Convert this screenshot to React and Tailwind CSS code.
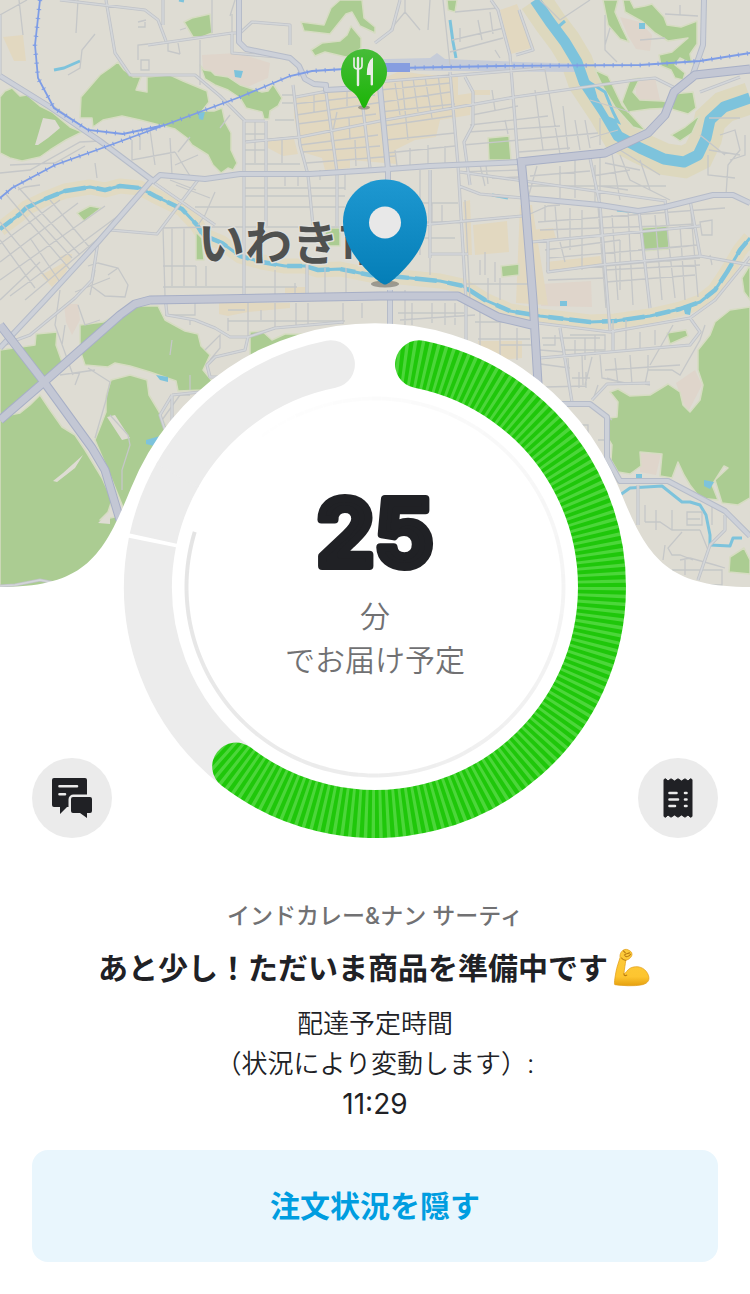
import React from "react";

const FOREST = [
  "M80 118L81 97L100 75L110 68L118 62L124 70L133 77L141 77L136 90L147 92L147 77L170 75L183 81L207 91L209 102L202 111L214 111L222 108L225 122L231 133L231 150L237 163L233 170L228 168L221 173L213 165L208 155L192 145L187 138L175 129L140 120L122 116L103 120L93 127L92 118Z",
  "M0 97L5 91L12 88L20 96L27 95L40 106L52 112L70 127L82 132L66 140L50 150L40 157L22 161L10 158L0 153Z",
  "M184 22L192 18L210 14L212 33L202 37L193 37Z",
  "M200 65L204 70L211 71L215 75L228 77L240 85L262 92L268 91L273 84L282 98L278 106L270 111L269 119L264 119L262 112L246 108L240 98L228 90L215 85L205 79Z",
  "M301 22L324 25L331 8L340 0L362 0L364 18L375 27V33L360 26L352 12L346 14L330 34L304 31Z",
  "M311 50L322 43L340 41L347 35L351 26L361 38L361 48L350 58L325 52L315 56Z",
  "M77 213L90 206L101 208L84 221Z",
  "M196 232L202 238L204 260H196Z",
  "M325 228H340V246H325Z",
  "M447 0H457L455 12L448 10Z",
  "M603 0H618L615 12L622 28L629 42L620 39L608 25Z",
  "M623 0H630L634 8L645 6L652 4L664 17L667 25L681 27L697 21V44L690 54L692 64L680 58L675 65L685 73L683 80L675 78L671 70L661 66L659 55L672 52L688 38L668 41L655 33L643 22L625 12Z",
  "M630 80L640 78L633 92L640 100L662 101L673 103L672 108L650 109L628 112L622 102Z",
  "M673 94L693 92L696 108L688 114L671 109Z",
  "M595 70L608 76L622 105L646 131L633 127L615 107L603 87Z",
  "M671 135L685 127L700 115L692 133L680 141Z",
  "M488 138L509 136L511 160H489Z",
  "M642 228L668 226L669 249L643 251Z",
  "M501 266L519 264V275L502 277Z",
  "M750 265L742 278L744 292L750 300Z",
  "M0 350L35 345L36 334L57 332L56 345L62 362L44 384L0 420Z",
  "M80 325L103 322L135 306H158L165 320L185 331L198 334L201 346L210 355L203 370L212 381L203 390L178 391L176 381L150 372L130 366L115 363L108 367L85 365L80 350Z",
  "M111 380L130 375L147 380L149 395L158 410L167 428L150 460L125 512L112 480L95 440L106 412L106 396Z",
  "M0 417L20 413L30 405L40 395L50 410L62 427L75 435L85 450L102 478L112 500L108 512L100 520L125 515L110 590H0Z",
  "M250 332L262 331L272 340L285 334L303 334L275 348L250 358Z",
  "M610 392L618 389L630 396L650 395L668 384L680 392L683 405L690 412L700 400L703 385L698 370V350L710 335L715 322L730 310L750 307V498L738 505L722 503L715 480L728 468L724 466L712 485L718 500L700 498L690 485L684 475L678 462L672 478L660 476L662 454L640 452L641 466L630 474L618 472L611 460L612 445L609 440V418L617 417L618 402Z",
  "M730 557L744 548L750 560V574L729 572Z",
  "M667 333L686 330L688 336L670 344Z",
];

const SAND = [
  "M3 37L23 35L26 61L14 61Z",
  "M294 97L384 78L400 71L420 74L458 77V95L472 93L470 115L440 120L436 137L415 140L395 150L397 164L350 160V168L325 170L322 158L302 152L298 136L294 116Z",
  "M268 141L294 139L298 154L283 156L268 148Z",
  "M472 90H490V95H472Z",
  "M500 10L517 4L534 47L511 54Z",
  "M41 275L65 262L60 256L72 254L70 262L66 272L52 287Z",
  "M285 287H305V298H285Z",
  "M219 303H290V308L248 312L228 316L219 314Z",
  "M473 225L507 221L509 252L475 255Z",
  "M463 202L470 200L472 255H466Z",
  "M520 205L532 205L548 305L516 303Z",
  "M530 230L553 228L556 238L532 240Z",
  "M546 262L600 256L602 264L547 271Z",
  "M478 341L522 341V358L500 360L479 347Z",
];

const PINK = [
  "M202 55L238 53L270 63L268 78L245 88L225 78L203 72Z",
  "M620 17L640 22L652 35L650 51L636 49L628 36Z",
  "M541 284L591 281L592 307L541 306Z",
  "M635 82L655 78L660 100L637 102Z",
  "M64 304H78L80 320L72 335L66 322Z",
  "M676 383L695 370L702 385L688 412L682 400Z",
  "M640 453L661 454L656 475L640 472Z",
];

const MINOR = [
  "M0 15L27 0M19 0L23 35M78 0L76 33M95 34L82 50L80 68L68 75M0 173L30 170L80 142L100 141M18 190L25 187L40 185M10 165L55 163L85 146M95 163L97 178",
  "M138 22L146 20M138 27H145V22M148 44L138 45V60M141 60H149V70H141Z M178 43L180 54M168 41V51L180 54M212 0V33M200 40V85M232 14V53M180 30L186 28M235 0L230 16",
  "M5 193L72 272M18 187L80 255M30 238L62 285M0 244L60 200M0 262L78 203M0 280L105 206M10 296L118 216M0 222L48 280M0 240L35 288M25 300L118 222M0 300L40 262M25 206L72 258M50 200L90 248",
  "M132 140L132 160L175 152M140 135V150M150 130L155 165M170 138L172 175M175 152L190 176M190 137L178 152M198 155L175 165M110 150L130 162M230 115L220 128M170 180L196 190M176 185L210 198",
  "M163 228L165 296M172 228V286M184 228V286M196 266V286M206 266V286M215 192L205 215L198 225M160 228L215 227H345M195 207H345M244 188H345M244 196H345M163 287H297M163 266H196M275 270V298M295 283V298M325 268V298M346 268V298M245 141L296 137M245 164H300M245 134H265M245 150H265M255 120V163M282 140V163M282 95H293M282 103H293M275 120H294M228 318V331M248 303V340M261 310V320M275 303V328M296 303V325M308 303V325M343 303V324M362 303V318M228 310H245M228 321H345M165 315H195V299M190 320V325",
  "M314 94V112M337 112L331 140M347 90V106M294 104L375 95M296 115L450 92M297 124L376 114M300 145L378 135M302 152L380 146M306 163L395 156M320 170V180M345 172V190M355 140L356 166M349 118L350 140M285 177V186M298 177V186",
  "M395 83L400 115M402 80L408 140M413 78L418 112M425 77L432 118M438 75L443 110M380 90L450 83M380 112L455 104M383 126L452 116M386 140L455 133M387 153L455 146M410 148V166M428 145V166M445 146V166M395 150L397 166",
  "M472 115L518 106M470 125L548 116M468 132L560 126M463 145L598 133M519 152L570 148M492 90L495 110M505 120L508 134M535 90L543 150M545 70L560 154M563 106L568 150M575 120L580 150M585 120L590 148M600 118V145M590 100L630 112M590 138L618 130M486 165L488 184M480 165L485 186M458 172L520 170M492 178L520 177",
  "M405 0V12L390 30M405 12L420 30M443 0L450 65M430 0L428 30M452 40L504 28M450 52L503 38M455 12L498 8M460 28V42M478 20L482 40M490 12L493 34M495 50L500 58M540 0L560 20L590 0M605 15V50L617 62M610 28L605 45M640 40L665 38M665 14L698 16M680 5V15",
  "M420 170V255M431 170V206M400 196V206M420 203H458M420 222H458M432 203V224M418 238H455M430 226V252M430 254V275M442 205V224M465 200L470 300M480 260V275M485 252V275M495 262V282M466 284H533M488 278V300M500 278V300",
  "M537 166L528 198M560 166V198M575 160V198M600 158V200M595 165V205M620 155L630 180L670 200M528 186H666M620 150L660 175M640 160L650 190M530 176L590 171M592 176L630 170M600 186L628 190M605 163L640 170M612 154L620 200",
  "M538 222L725 208M530 214L548 206L560 205M540 230L660 226L695 224M543 240L600 236M545 250L620 240M548 258L690 246M546 271L700 258M548 280L605 278M605 270L700 265M606 282L695 275M545 205V222M555 205L558 240M570 208V250M582 210V270M560 242L565 262M598 206L606 308M612 215L618 300M620 240V290M628 210L633 305M640 212L650 308M655 215L662 300M665 210L675 298M680 225L685 300M690 200L698 297M700 222L712 220V235H702ZM710 255L712 265M638 250L698 245",
  "M720 135L735 130L740 150L728 165L726 195M745 135V155L730 160M708 155V175L735 178M709 150L740 155M709 118H740M700 135L725 155",
  "M405 290V325M398 313H464M412 303V325M432 303V323M445 303V325M455 303V325M400 320L475 315M480 303V360M500 320V360M478 339H530M475 322H530M500 345H540M517 328V360",
  "M542 338H600M543 345H555V335M540 350L565 352M560 338L565 350H605V335H570M575 340V355M585 338V360M595 335V355M568 358L571 402M582 355L583 385M592 357L585 385M600 355L602 378L630 384M615 358L618 385M630 355L632 385M648 355V370L645 384M605 370L680 365M545 387L586 386M540 364L570 368M572 378H590M579 372V388M586 372V388M613 320V350M626 320V350M640 332V350M655 330V345M673 325L650 365",
  "M648 370H672L680 375L700 340L705 325M645 384L650 385M607 378L628 384M598 385L593 400M590 402L612 420M580 425H588V440H580M598 440H607",
  "M645 505V522M656 510V530M672 510V530M645 522H660L672 530H700M687 512H702V525H687ZM687 519H700M693 560L680 555H672L668 548L682 532M665 545L663 560M680 560L690 558L715 565L725 568M672 570H722V585H690M685 560V575M700 530L708 550M712 505V525",
  "M60 290L55 325L73 375M78 305L85 325L100 320M65 325L62 345M88 368L110 382L106 400L95 438M60 375L95 370M80 372L75 385M110 415L128 435L130 445L122 470V490M170 355L172 340M205 350L220 335V348L210 360M190 375V390M162 420L180 395H190",
  "M88 266L98 263L118 268L128 285L125 297L105 296L90 285M95 270L90 295M118 268L108 275M75 292L110 278",
];

const STREETS = [
  "M106 0L115 53L130 75L195 75L220 96L245 121H265",
  "M60 0L145 10L158 20L166 41",
  "M148 45L232 33H240L252 22L290 25V45",
  "M163 0V25",
  "M0 15V75",
  "M232 33V53L290 58",
  "M110 230L157 234L198 180",
  "M150 180L215 225",
  "M98 242L92 280L75 298",
  "M75 298L30 335L0 346",
  "M165 296L167 315L195 320L215 328L230 337H248L275 328L343 322",
  "M248 337L245 350L215 357L207 365L210 377H225",
  "M172 395L200 392M172 395V425M172 395L160 415L165 430",
  "M266 121V226M244 121V298",
  "M293 85L300 145L308 175L313 226",
  "M326 92L337 172V226M363 108L370 168M307 265V298",
  "M296 97L375 82L400 80L545 68",
  "M246 142L300 137L385 120L515 97L635 80L655 78L675 88",
  "M400 0L392 30L375 43",
  "M491 0L498 10L510 55L518 160",
  "M516 55L533 50L519 10",
  "M450 72L458 165L466 300V345M430 170V258",
  "M465 77L473 92V125L464 142L470 185",
  "M459 186L480 194L523 198M460 172L666 201",
  "M420 225L522 216M430 254H468",
  "M532 242L700 226M548 240V272L600 265L700 256L750 265",
  "M590 158L600 205L610 330M695 75L750 72",
  "M665 200L668 225M639 212L650 308M690 200L700 255",
  "M538 323L610 332L690 318L715 300L750 257",
  "M560 328L572 402M613 330V350M540 358L690 345L700 332L690 318",
  "M592 400L607 384L650 383M638 485V525M725 515V530L710 545L698 580",
  "M700 92L740 77",
  "M55 583L40 580L15 585L0 586",
];

const AVENUES = [
  "M0 76L50 107L100 141L152 180L98 242L45 300L0 348",
  "M152 182L160 175L205 179L240 174H310L375 170L430 166L519 162",
  "M239 0V42L246 49L290 58L299 66L305 79L314 84L326 85V90L380 87L388 170V200",
  "M525 198L600 205L638 211L665 207L713 195H733L750 203",
  "M704 0L703 45L692 77",
  "M560 404H590L607 417V458L620 481H668L725 511L750 536",
  "M390 290V330",
];

const HIGHWAYS = [
  "M0 420L44 382L120 315L135 304L150 300L215 299L380 296H458L498 317L536 326",
  "M0 325L44 382L92 448L105 470L120 520",
  "M521 158L525 200L533 300L539 400",
  "M519 162L605 153L648 133L665 115L674 92L695 75L750 69",
];

const STREAM =
  "M0 229L20 214L26 208L45 199L65 191L90 187L105 190L120 186L140 188L155 196L182 209L197 225L203 235L222 243L240 256L262 262L285 266L305 266L318 270L340 269L370 275L400 277L440 281L463 286L485 300L510 311L540 316L590 322L615 321L650 316L680 309L700 302L715 290L727 272L740 250L750 238";
const RIVER =
  "M535 0L550 22L565 42L577 62L584 82L604 112L618 136L640 148L664 159L684 162L698 155L706 138L710 120L724 107L750 98";
const RAIL_A = "M40 0L35 45L38 78L54 108L88 130L123 134L165 125";
const RAIL_B =
  "M0 198L12 188L55 165L105 147L165 125L205 110L240 97L290 76L312 71L345 69L500 66L640 65L700 61L750 53";

function CityMap() {
  return (
    <g fill="none">
      <rect width="750" height="600" fill="#dedcd3" />
      <path d={RIVER} stroke="#ddd8be" strokeWidth="32" />
      <path d={STREAM} stroke="#e1dac2" strokeWidth="15" strokeLinejoin="round" />
      <path d={PINK.join("")} fill="#dfd5cb" />
      <path d={SAND.join("")} fill="#e2d8c0" />
      <path d="M345 60L430 58L437 53L445 59L520 62L590 64L575 72L345 70Z" fill="#c6ccd8" />
      <path d={FOREST.join("")} fill="#abcc92" stroke="#d6dcc2" strokeWidth="1.5" strokeLinejoin="round" />
      <path
        d="M35 145L43 118L55 120L60 128L48 138L38 145ZM53 481L63 473L83 455L75 468L57 482ZM107 417L115 415L130 438L122 440ZM98 523L110 512V524Z"
        fill="#dedcd3"
      />
      <path d={RIVER} stroke="#7dc3dc" strokeWidth="11" strokeLinejoin="round" />
      <path d="M592 84L605 92L613 112L618 122L608 118L596 98Z" fill="#ddd8be" stroke="#7dc3dc" strokeWidth="3" />
      <path d={STREAM} stroke="#7dc3dc" strokeWidth="3" strokeLinejoin="round" />
      <path d={STREAM} stroke="#7dc3dc" strokeWidth="4.5" strokeDasharray="15 6 22 11" strokeLinejoin="round" />
      <path
        d="M54 70L64 68L80 61M450 20L453 42L456 58M558 27L565 21M492 195L508 198M617 210L637 212M179 0L184 1M620 495L630 488L662 486L672 494L682 502H690L700 505L706 515L710 535V545L730 546L733 538L742 538"
        stroke="#7dc3dc"
        strokeWidth="3"
        strokeLinejoin="round"
      />
      <path
        d="M234 70L243 71L241 78L235 77ZM198 113L205 112L203 120L199 119ZM639 23H645V29H639ZM156 375L168 377V382L160 380ZM146 440L160 436L154 446L146 444ZM560 301H567V306H560ZM683 306L692 304L690 315L685 314ZM704 480L714 482L710 489L704 486ZM636 474H642V479H636Z"
        fill="#7dc3dc"
      />
      <path d={MINOR.join("")} stroke="#c5c7c8" strokeWidth="1.3" />
      <path d={STREETS.join("")} stroke="#c0c3c8" strokeWidth="3.2" strokeLinejoin="round" />
      <path d={STREETS.join("")} stroke="#d3d6d9" strokeWidth="1.6" strokeLinejoin="round" />
      <path d={AVENUES.join("")} stroke="#b6bcc9" strokeWidth="6" strokeLinejoin="round" />
      <path d={AVENUES.join("")} stroke="#cdd1d9" strokeWidth="4" strokeLinejoin="round" />
      <path d={HIGHWAYS.join("")} stroke="#a7afc6" strokeWidth="9" strokeLinejoin="round" />
      <path d={HIGHWAYS.join("")} stroke="#c3c7d4" strokeWidth="7" strokeLinejoin="round" />
      <path d={RAIL_A + RAIL_B} stroke="#7e9de6" strokeWidth="1.8" />
      <path d={RAIL_A + RAIL_B} stroke="#7e9de6" strokeWidth="4.5" strokeDasharray="1 8" />
      <path d="M375 67.500H410" stroke="#869de0" strokeWidth="9" />
    </g>
  );
}

function CityLabel() {
  return (
    <text
      x="198"
      y="260"
      fontSize="47"
      fill="#4f5150"
      stroke="#dfdfdb"
      strokeWidth="3"
      strokeLinejoin="round"
      paintOrder="stroke"
      className="font-['Noto_Sans_CJK_JP',sans-serif] font-bold"
    >
      いわき市
    </text>
  );
}

function RestaurantPin() {
  return (
    <g>
      <ellipse cx="364" cy="107.500" rx="6" ry="2" fill="#6f6f66" opacity=".6" />
      <path
        d="M364 49a23 23 0 0 1 23 23c0 9-5 15.500-11 19.500c-4 2.800-6 6-7.500 9.500c-1.500 3.500-3 7-4.500 7s-3-3.500-4.500-7c-1.500-3.500-3.500-6.700-7.500-9.500c-6-4-11-10.500-11-19.500a23 23 0 0 1 23-23z"
        fill="url(#greenPin)"
      />
      <g fill="none" stroke="#e9ede6" strokeLinecap="round">
        <path d="M354 58v7.500q0 3.500 4 3.500t4-3.500V58" strokeWidth="1.700" />
        <path d="M358 58v27" strokeWidth="2.400" />
      </g>
      <path d="M373 57.500v27q0 1-1.200 1t-1.200-1V75h-3.800q0-14 6.200-17.500z" fill="#e9ede6" />
    </g>
  );
}

function HomePin() {
  return (
    <g>
      <ellipse cx="385" cy="284" rx="14" ry="3.500" fill="#77756c" opacity=".65" />
      <path
        d="M385 179.500c23.500 0 42 18.500 42 42c0 21-13 38-26 51c-6 6-11 10-14 11.500q-2 1-4 0c-3-1.500-8-5.500-14-11.500c-13-13-26-30-26-51c0-23.500 18.500-42 42-42z"
        fill="url(#bluePin)"
      />
      <circle cx="385" cy="222.500" r="16" fill="#e8e8e8" />
    </g>
  );
}

const CX = 375;
const CY = 587;

function at(radius, degrees) {
  const a = (degrees * Math.PI) / 180;
  return `${(CX + radius * Math.sin(a)).toFixed(2)} ${(CY - radius * Math.cos(a)).toFixed(2)}`;
}

function arc(radius, from, to) {
  return `M${at(radius, from)}A${radius} ${radius} 0 ${to - from > 180 ? 1 : 0} 1 ${at(radius, to)}`;
}

const FADE_START = -46;
const FADE_END = 287;
const FADE_STEPS = 111;

function ProgressRing() {
  const step = (FADE_END - FADE_START) / FADE_STEPS;
  return (
    <g fill="none">
      {Array.from({ length: FADE_STEPS }, (_, i) => (
        <path
          key={i}
          d={arc(188.5, FADE_START + i * step, FADE_START + (i + 1) * step)}
          stroke="#000"
          strokeOpacity={((i / FADE_STEPS) * 0.105).toFixed(4)}
          strokeWidth="4"
        />
      ))}
      <path d={arc(227, 217, 281.3)} stroke="#ececec" strokeWidth="48" />
      <path d={arc(227, 282.3, 300)} stroke="#ececec" strokeWidth="48" />
      <path d={arc(227, 299.5, 348.8)} stroke="#ececec" strokeWidth="48" strokeLinecap="round" mask="url(#afterGap)" />
      <mask id="afterGap" maskUnits="userSpaceOnUse" x="0" y="300" width="750" height="560">
        <path d={`M${CX} ${CY}L${at(400, 299.4)}L${at(600, 330)}L${at(400, 359)}Z`} fill="#fff" />
      </mask>
      <mask id="progress" maskUnits="userSpaceOnUse" x="100" y="320" width="550" height="530">
        <path d={arc(227, 11.2, 217.7)} stroke="#fff" strokeWidth="48" strokeLinecap="round" />
      </mask>
      <g mask="url(#progress)">
        <circle cx={CX} cy={CY} r="227" stroke="#1fc70a" strokeWidth="50" />
        <circle cx={CX} cy={CY} r="227" stroke="#4cd63a" strokeWidth="50" pathLength="400" strokeDasharray="0.9 1.1" />
      </g>
    </g>
  );
}

function Hero() {
  return (
    <svg viewBox="0 0 750 838" className="col-start-1 row-start-1 block h-auto w-full" role="img" aria-label="配達マップ">
      <defs>
        <linearGradient id="greenPin" x1="0" y1="0" x2="0" y2="1">
          <stop offset="0" stopColor="#46bc38" />
          <stop offset="1" stopColor="#1cb508" />
        </linearGradient>
        <linearGradient id="bluePin" x1="0" y1="0" x2="0" y2="1">
          <stop offset="0" stopColor="#1e98d1" />
          <stop offset="1" stopColor="#047eb7" />
        </linearGradient>
      </defs>
      <CityMap />
      <CityLabel />
      <RestaurantPin />
      <HomePin />
      <path
        d="M0 587C85 587 103 557 131 488A263 263 0 0 1 619 488C647 557 665 587 750 587V838H0Z"
        fill="#fff"
      />
      <ProgressRing />
    </svg>
  );
}

function ChatIcon() {
  return (
    <svg viewBox="0 0 40 40" className="size-10" aria-hidden="true">
      <path d="M2 0H33a2 2 0 0 1 2 2V27a2 2 0 0 1-2 2H15L8 36V29H2a2 2 0 0 1-2-2V2a2 2 0 0 1 2-2z" fill="#202125" />
      <path d="M16.500 36V21.500a5 5 0 0 1 5-5H40V29H19z" fill="#ebebeb" />
      <path d="M21 19H38a2 2 0 0 1 2 2V33a2 2 0 0 1-2 2H35V40L28 35H21a2 2 0 0 1-2-2V21a2 2 0 0 1 2-2z" fill="#202125" />
      <path d="M7.500 8.300H25M7.500 16.300H13" stroke="#ebebeb" strokeWidth="2.600" strokeLinecap="round" />
    </svg>
  );
}

function ReceiptIcon() {
  return (
    <svg viewBox="0 0 40 40" className="size-10" aria-hidden="true">
      <path
        d="M6 1.500L7.500 .8L10 3L13 .8L16.500 3L20 .8L23.500 3L27 .8L30 3L32.500 .8L34 1.500V38.500L32.500 39.200L30 37L27 39.200L23.500 37L20 39.200L16.500 37L13 39.200L10 37L7.500 39.200L6 38.500Z"
        fill="#202125"
        stroke="#202125"
        strokeLinejoin="round"
      />
      <path
        d="M11.500 15H18.500M11.500 21.500H20M11.500 28H17M27 15H28.500M27 21.500H28.500M27 28H28.500"
        stroke="#ebebeb"
        strokeWidth="2.600"
        strokeLinecap="round"
      />
    </svg>
  );
}

function FlexedArm() {
  return (
    <svg viewBox="0 0 40 42" className="size-10 shrink-0" role="img" aria-label="力こぶ">
      <defs>
        <linearGradient id="skin" x1="0" y1="0" x2="0" y2="1">
          <stop offset="0" stopColor="#fccb3c" />
          <stop offset=".75" stopColor="#fdc530" />
          <stop offset="1" stopColor="#e5a00f" />
        </linearGradient>
      </defs>
      <path
        d="M7.500 10C7 6 9 2.500 12.500 1.500C15 1 17 2.500 18.500 3.500C20.500 5 20.500 8 18.500 10C17 12 14.500 12.500 13.500 12.800C13 17 12 22 11.500 27C14 26.500 14.500 23 18.500 21C25 18 33 20 36.500 27C39.500 33 37 37 31 38.500C22 40.500 10 39.500 2 38.500C1 38 2 32 3 26C4 20 6 15 7.500 10Z"
        fill="url(#skin)"
        stroke="#e3a11c"
        strokeWidth=".8"
      />
      <path
        d="M11.500 27C11.500 29 13 29.500 14.500 28.500M12 7.500C13.500 5.500 16 6 17.500 5M13 8.500C14.500 10 17 8.500 18.500 6.500M9 10.500C10.500 12.500 12 13 13.500 12.800M11 3L13 5"
        fill="none"
        stroke="#b97a10"
        strokeWidth="1.100"
        strokeLinecap="round"
      />
    </svg>
  );
}

function RoundButton({ label, children }) {
  return (
    <button type="button" aria-label={label} className="flex size-20 items-center justify-center rounded-full bg-[#ebebeb]">
      {children}
    </button>
  );
}

export default function App() {
  return (
    <main className="min-h-screen w-full bg-white font-[Inter,'Noto_Sans_CJK_JP',sans-serif] text-[#202125]" lang="ja">
      <section className="grid">
        <Hero />
        <div className="col-start-1 row-start-1 flex flex-col items-center pt-[64%] text-center text-3xl leading-[44px] text-[#717173]">
          <svg viewBox="0 0 160 112" className="h-28 w-40 overflow-visible">
            <text
              x="80"
              y="86"
              textAnchor="middle"
              fontSize="92"
              fill="#202125"
              stroke="#202125"
              strokeWidth="8"
              strokeLinejoin="round"
              className="font-[Inter,sans-serif] font-bold"
            >
              25
            </text>
          </svg>
          <p className="mt-0.5 font-[350]">
            分<br />
            でお届け予定
          </p>
        </div>
        <div className="col-start-1 row-start-1 flex justify-between self-end px-8">
          <RoundButton label="チャット">
            <ChatIcon />
          </RoundButton>
          <RoundButton label="注文内容">
            <ReceiptIcon />
          </RoundButton>
        </div>
      </section>

      <section className="flex flex-col px-8 pt-15 pb-8 text-center">
        <p className="text-[23px] leading-9 font-medium text-[#717173]">インドカレー&amp;ナン サーティ</p>
        <h1 className="mt-3.5 flex items-center justify-center gap-1 text-3xl leading-10 font-bold">
          <span>あと少し！ただいま商品を準備中です</span>
          <FlexedArm />
        </h1>
        <p className="mt-4 text-[26px] leading-10 font-[350]">
          配達予定時間
          <br />
          （状況により変動します）:
        </p>
        <time className="text-[28px] leading-10">11:29</time>
        <button type="button" className="mt-6.5 h-28 w-full rounded-2xl bg-[#e9f6fd] text-3xl font-bold text-[#009de0]">
          注文状況を隠す
        </button>
      </section>
    </main>
  );
}
